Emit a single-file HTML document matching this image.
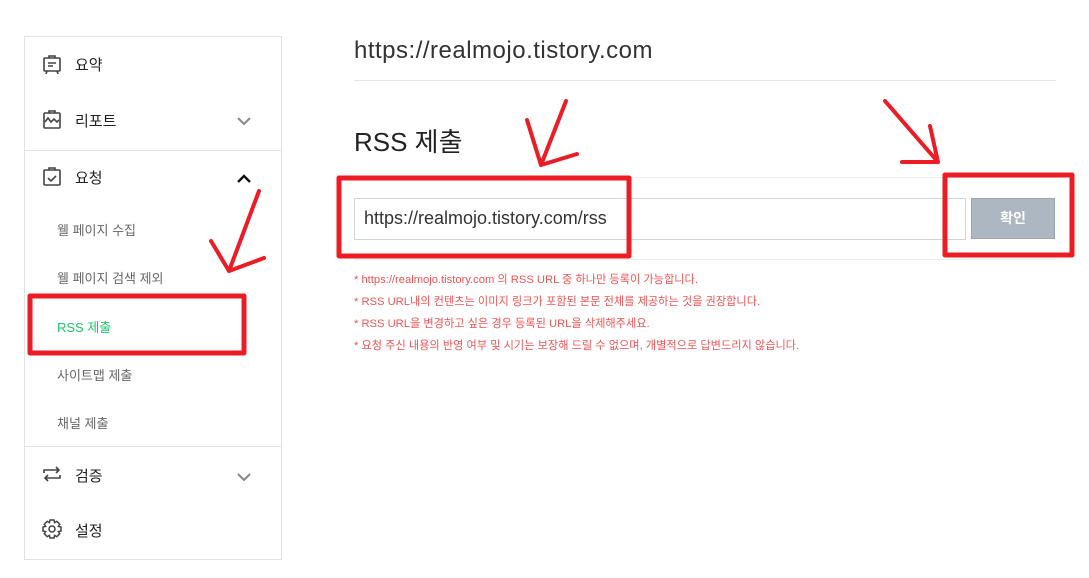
<!DOCTYPE html>
<html><head><meta charset="utf-8"><style>
body{margin:0;width:1089px;height:578px;background:#fff;font-family:"Liberation Sans","Noto Sans CJK KR",sans-serif;position:relative;overflow:hidden}
.a{position:absolute}
.side{left:24px;top:36px;width:256px;height:522px;border:1px solid #e2e2e2}
.hr{position:absolute;left:0;width:256px;height:1px;background:#e2e2e2}
.m{position:absolute;left:50px;font-size:15px;color:#222}
.s{position:absolute;left:32px;font-size:13px;color:#666}
.ic{position:absolute;left:16px}
.note{position:absolute;left:354px;font-size:11.2px;color:#f05454}
</style></head><body>
<div class="a side">
 <svg class="ic" style="top:17px" width="22" height="22" viewBox="0 0 22 22" fill="none" stroke="#444" stroke-width="1.6"><rect x="3" y="4" width="16" height="13" rx="1"/><path d="M8 4V2h6v2M7 9h8M7 12h5M6 17l-1 3M16 17l1 3"/></svg>
 <div class="m" style="top:17px">요약</div>
 <svg class="ic" style="top:72px" width="22" height="22" viewBox="0 0 22 22" fill="none" stroke="#444" stroke-width="1.6"><rect x="3" y="4" width="16" height="15" rx="1"/><path d="M8 4V2h6v2M4 13l3-4 3 4 3-3 3 3 2-2"/></svg>
 <div class="m" style="top:73px">리포트</div>
 <svg class="a" style="left:211px;top:79px" width="16" height="10" viewBox="0 0 16 10" fill="none" stroke="#888" stroke-width="2"><path d="M2 2l6 6 6-6"/></svg>
 <div class="hr" style="top:113px"></div>
 <svg class="ic" style="top:129px" width="22" height="22" viewBox="0 0 22 22" fill="none" stroke="#444" stroke-width="1.6"><rect x="3" y="4" width="16" height="15" rx="1"/><path d="M8 4V2h6v2M7 12l3 3 5-5"/></svg>
 <div class="m" style="top:130px">요청</div>
 <svg class="a" style="left:211px;top:137px" width="16" height="10" viewBox="0 0 16 10" fill="none" stroke="#111" stroke-width="2.4"><path d="M2 8l6-6 6 6"/></svg>
 <div class="s" style="top:183px">웰 페이지 수집</div>
 <div class="s" style="top:231px">웰 페이지 검색 제외</div>
 <div class="s" style="top:280px;color:#1ec769">RSS 제출</div>
 <div class="s" style="top:328px">사이트맵 제출</div>
 <div class="s" style="top:376px">채널 제출</div>
 <div class="hr" style="top:409px"></div>
 <svg class="ic" style="top:426px" width="22" height="22" viewBox="0 0 22 22" fill="none" stroke="#444" stroke-width="1.6"><path d="M3 10V7h15M15 4l3 3-3 3M19 12v3H4M7 12l-3 3 3 3"/></svg>
 <div class="m" style="top:428px">검증</div>
 <svg class="a" style="left:211px;top:435px" width="16" height="10" viewBox="0 0 16 10" fill="none" stroke="#888" stroke-width="2"><path d="M2 2l6 6 6-6"/></svg>
 <svg class="ic" style="top:481px" width="22" height="22" viewBox="0 0 22 22" fill="none" stroke="#444" stroke-width="1.5"><path d="M9 2h4l.6 2.6 2.2-1.3 2.9 2.9-1.3 2.2L20 9v4l-2.6.6 1.3 2.2-2.9 2.9-2.2-1.3L13 20H9l-.6-2.6-2.2 1.3-2.9-2.9 1.3-2.2L2 13V9l2.6-.6-1.3-2.2 2.9-2.9 2.2 1.3z"/><circle cx="11" cy="11" r="3"/></svg>
 <div class="m" style="top:483px">설정</div>
</div>

<div class="a" style="left:354px;top:37px;font-size:24px;letter-spacing:0.5px;color:#333">https://realmojo.tistory.com</div>
<div class="a" style="left:354px;top:80px;width:702px;height:1px;background:#e5e5e5"></div>
<div class="a" style="left:354px;top:122px;font-size:26px;color:#222">RSS 제출</div>
<div class="a" style="left:354px;top:177px;width:702px;height:1px;background:#eee"></div>
<div class="a" style="left:354px;top:198px;width:610px;height:40px;border:1px solid #cfd3da"></div>
<div class="a" style="left:364px;top:208px;font-size:18px;color:#333">https://realmojo.tistory.com/rss</div>
<div class="a" style="left:971px;top:198px;width:84px;height:41px;background:#adb7c1;border:1px solid #9aa5b0;box-sizing:border-box;color:#fff;font-size:14px;font-weight:bold;text-align:center;line-height:39px">확인</div>
<div class="a" style="left:354px;top:259px;width:702px;height:1px;background:#eee"></div>
<div class="note" style="top:271px">* https://realmojo.tistory.com 의 RSS URL 중 하나만 등록이 가능합니다.</div>
<div class="note" style="top:293px">* RSS URL내의 컨텐츠는 이미지 링크가 포함된 본문 전체를 제공하는 것을 권장합니다.</div>
<div class="note" style="top:315px">* RSS URL을 변경하고 싶은 경우 등록된 URL을 삭제해주세요.</div>
<div class="note" style="top:337px">* 요청 주신 내용의 반영 여부 및 시기는 보장해 드릴 수 없으며, 개별적으로 답변드리지 않습니다.</div>

<svg class="a" style="left:0;top:0" width="1089" height="578" fill="none" stroke="#ec1c24" stroke-width="5" stroke-linecap="round" stroke-linejoin="round">
 <rect x="30" y="296" width="214" height="57"/>
 <rect x="339" y="178" width="290" height="78"/>
 <rect x="945" y="175" width="127" height="80"/>
 <path d="M259 191L229 271M211 241L229 271 264 258" stroke-width="4"/>
 <path d="M566 101L541 165M527 120L541 165 577 154" stroke-width="4"/>
 <path d="M885 101L938 162M930 126L938 162 902 162" stroke-width="4"/>
</svg>
</body></html>
